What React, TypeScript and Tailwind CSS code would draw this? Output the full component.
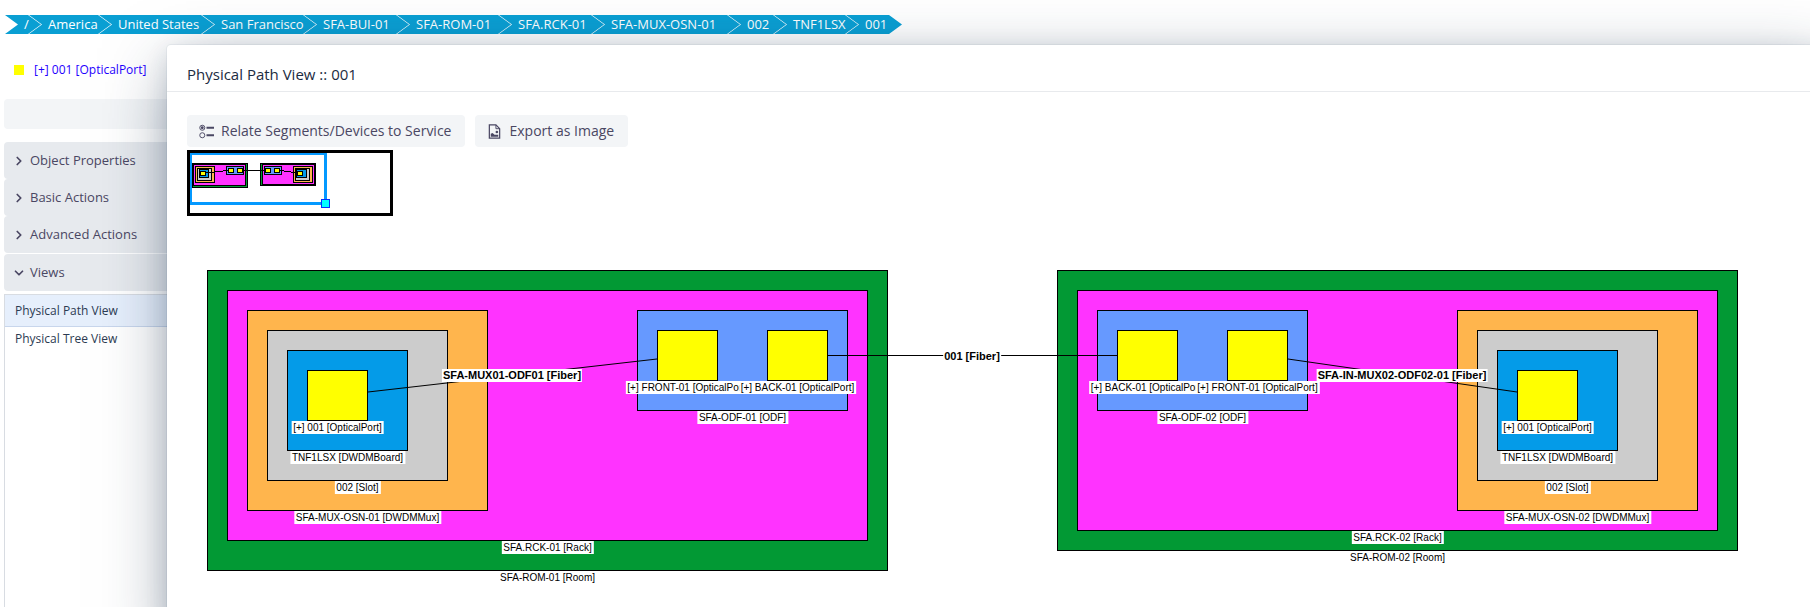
import type { ReactNode } from 'react';
import clsx from 'clsx';
import { ChevronDown, ChevronRight } from 'lucide-react';

interface Crumb {
  name: string;
  width: number;
}

interface GraphNode {
  id: string;
  label: string;
  x: number;
  y: number;
  width: number;
  height: number;
  color: string;
}

interface GraphEdge {
  id: string;
  label: string;
  from: [number, number];
  to: [number, number];
  labelX: number;
  labelY: number;
}

const breadcrumbs: Crumb[] = [
  { name: '/', width: 36 },
  { name: 'America', width: 82 },
  { name: 'United States', width: 115 },
  { name: 'San Francisco', width: 114 },
  { name: 'SFA-BUI-01', width: 105 },
  { name: 'SFA-ROM-01', width: 114 },
  { name: 'SFA.RCK-01', width: 105 },
  { name: 'SFA-MUX-OSN-01', width: 148 },
  { name: '002', width: 58 },
  { name: 'TNF1LSX', width: 84 },
  { name: '001', width: 56 },
];

const sections = ['Object Properties', 'Basic Actions', 'Advanced Actions'];

const nodes: GraphNode[] = [
  { id: 'room1', label: 'SFA-ROM-01 [Room]', x: 20, y: 20, width: 681, height: 301, color: 'bg-[#029934]' },
  { id: 'rack1', label: 'SFA.RCK-01 [Rack]', x: 40, y: 40, width: 641, height: 251, color: 'bg-[#ff33ff]' },
  { id: 'mux1', label: 'SFA-MUX-OSN-01 [DWDMMux]', x: 60, y: 60, width: 241, height: 201, color: 'bg-[#ffb54d]' },
  { id: 'slot1', label: '002 [Slot]', x: 80, y: 80, width: 181, height: 151, color: 'bg-[#cccccc]' },
  { id: 'board1', label: 'TNF1LSX [DWDMBoard]', x: 100, y: 100, width: 121, height: 101, color: 'bg-[#049be8]' },
  { id: 'port1', label: '[+] 001 [OpticalPort]', x: 120, y: 120, width: 61, height: 51, color: 'bg-[#ffff00]' },
  { id: 'odf1', label: 'SFA-ODF-01 [ODF]', x: 450, y: 60, width: 211, height: 101, color: 'bg-[#6699ff]' },
  { id: 'front1', label: '[+] FRONT-01 [OpticalPort]', x: 470, y: 80, width: 61, height: 51, color: 'bg-[#ffff00]' },
  { id: 'back1', label: '[+] BACK-01 [OpticalPort]', x: 580, y: 80, width: 61, height: 51, color: 'bg-[#ffff00]' },
  { id: 'room2', label: 'SFA-ROM-02 [Room]', x: 870, y: 20, width: 681, height: 281, color: 'bg-[#029934]' },
  { id: 'rack2', label: 'SFA.RCK-02 [Rack]', x: 890, y: 40, width: 641, height: 241, color: 'bg-[#ff33ff]' },
  { id: 'odf2', label: 'SFA-ODF-02 [ODF]', x: 910, y: 60, width: 211, height: 101, color: 'bg-[#6699ff]' },
  { id: 'back2', label: '[+] BACK-01 [OpticalPort]', x: 930, y: 80, width: 61, height: 51, color: 'bg-[#ffff00]' },
  { id: 'front2', label: '[+] FRONT-01 [OpticalPort]', x: 1040, y: 80, width: 61, height: 51, color: 'bg-[#ffff00]' },
  { id: 'mux2', label: 'SFA-MUX-OSN-02 [DWDMMux]', x: 1270, y: 60, width: 241, height: 201, color: 'bg-[#ffb54d]' },
  { id: 'slot2', label: '002 [Slot]', x: 1290, y: 80, width: 181, height: 151, color: 'bg-[#cccccc]' },
  { id: 'board2', label: 'TNF1LSX [DWDMBoard]', x: 1310, y: 100, width: 121, height: 101, color: 'bg-[#049be8]' },
  { id: 'port2', label: '[+] 001 [OpticalPort]', x: 1330, y: 120, width: 61, height: 51, color: 'bg-[#ffff00]' },
];

const edges: GraphEdge[] = [
  { id: 'e1', label: 'SFA-MUX01-ODF01 [Fiber]', from: [181, 142], to: [470, 109], labelX: 325, labelY: 119 },
  { id: 'e2', label: '001 [Fiber]', from: [641, 105.5], to: [930, 105.5], labelX: 785, labelY: 100 },
  { id: 'e3', label: 'SFA-IN-MUX02-ODF02-01 [Fiber]', from: [1101, 109], to: [1330, 142], labelX: 1215, labelY: 119 },
];

// [x, y, width, height, fill]
const outlineRects: [number, number, number, number, string][] = [
  [5, 13, 56, 25, '#029934'],
  [6, 14, 53, 22, '#ff33ff'],
  [8, 16, 20, 17, '#ffb54d'],
  [10, 18, 15, 13, '#cccccc'],
  [12, 19, 10, 9, '#049be8'],
  [13, 21, 6, 5, '#ffff00'],
  [39, 16, 18, 9, '#6699ff'],
  [41, 18, 6, 5, '#ffff00'],
  [50, 18, 6, 5, '#ffff00'],
  [73, 13, 56, 23, '#029934'],
  [75, 14, 53, 21, '#ff33ff'],
  [77, 16, 18, 9, '#6699ff'],
  [78, 18, 6, 5, '#ffff00'],
  [87, 18, 6, 5, '#ffff00'],
  [106, 16, 20, 17, '#ffb54d'],
  [108, 18, 15, 13, '#cccccc'],
  [109, 19, 11, 9, '#049be8'],
  [110, 21, 6, 5, '#ffff00'],
];

function Breadcrumbs() {
  return (
    <nav aria-label="Location" className="flex pt-[15px] pl-[5px]">
      {breadcrumbs.map((crumb, index) => (
        <a
          key={crumb.name}
          href="#"
          className={clsx(
            'h-[19px] shrink-0 bg-[#0a9fd3] pl-[19px] text-[13px] leading-[19px] whitespace-nowrap text-white',
            '[clip-path:polygon(0_0,calc(100%-13px)_0,100%_50%,calc(100%-13px)_100%,0_100%,13px_50%)]',
            index > 0 && '-ml-3'
          )}
          style={{ minWidth: crumb.width }}
        >
          {crumb.name}
        </a>
      ))}
    </nav>
  );
}

function Sidebar() {
  return (
    <aside className="w-[300px] pl-1">
      <div className="flex h-[65px] items-center gap-[10px] pt-[7px] pl-[10px]">
        <span className="size-[10px] bg-[#ffff00]" />
        <a href="#" className="text-xs text-[#1f00ff]">
          [+] 001 [OpticalPort]
        </a>
      </div>
      <div className="h-[30px] rounded bg-[#f3f5f7]" />
      <div className="mt-[13px]">
        {sections.map((title) => (
          <button
            key={title}
            type="button"
            className="flex h-[37px] w-full items-center gap-1 rounded bg-[#e7eaee] pl-2 text-[13px] text-[#4a4763]"
          >
            <ChevronRight className="size-[14px]" strokeWidth={3} />
            {title}
          </button>
        ))}
        <button
          type="button"
          className="mt-px flex h-[37px] w-full items-center gap-1 rounded bg-[#e7eaee] pl-2 text-[13px] text-[#4a4763]"
        >
          <ChevronDown className="size-[14px]" strokeWidth={3} />
          Views
        </button>
        <ul className="mt-[3px] h-[320px] border-t border-l border-[#d8dce2] text-xs text-[#2c3b52]">
          <li className="border-b border-[#c8d6ec] bg-[#e6effc]">
            <a href="#" className="flex h-[31px] items-center pl-[10px]">
              Physical Path View
            </a>
          </li>
          <li>
            <a href="#" className="flex h-6 items-center pl-[10px]">
              Physical Tree View
            </a>
          </li>
        </ul>
      </div>
    </aside>
  );
}

function ToolButton({ icon, children }: { icon: ReactNode; children: ReactNode }) {
  return (
    <button
      type="button"
      className="flex h-8 items-center gap-[7px] rounded bg-[#f3f5f7] pr-[14px] pl-3 text-sm whitespace-nowrap text-[#4a4763]"
    >
      {icon}
      {children}
    </button>
  );
}

function RelateIcon() {
  return (
    <svg viewBox="0 0 16 16" className="size-[15px]" fill="none" stroke="currentColor">
      <circle cx="3.5" cy="4" r="2.7" />
      <circle cx="3.5" cy="4" r="1.5" fill="currentColor" stroke="none" />
      <circle cx="3.5" cy="12" r="2.7" />
      <path d="M8 4h8M8 12h8" strokeWidth="2" />
    </svg>
  );
}

function FileImageIcon() {
  return (
    <svg viewBox="0 0 16 16" className="size-[15px]" fill="none" stroke="currentColor">
      <path d="M2.5 1h7l4 4v10h-11z" strokeWidth="1.3" />
      <path d="M9.5 1v4h4" />
      <path d="M4 13.5v-3l2-1 2 2h4v2z" fill="currentColor" stroke="none" />
      <circle cx="10.5" cy="8.5" r="1.4" fill="currentColor" stroke="none" />
    </svg>
  );
}

function Outline() {
  return (
    <svg width="206" height="66" viewBox="0 0 206 66" shapeRendering="crispEdges" role="img" aria-label="Outline">
      <rect width="206" height="66" fill="#000000" />
      <rect x="3" y="3" width="200" height="60" fill="#ffffff" />
      <path d="M3 3h137v52H3zM5 5v47h132V5z" fill="#0499ff" fillRule="evenodd" />
      {outlineRects.map(([x, y, width, height, fill], index) => (
        <g key={index}>
          <rect x={x} y={y} width={width} height={height} fill="#000000" />
          <rect x={x + 1} y={y + 1} width={width - 2} height={height - 2} fill={fill} />
        </g>
      ))}
      <path
        d="M19 22h9v1h-9zM28 21h8v1h-8zM36 20h5v1h-5zM56 20h22v1H56zM93 20h4v1h-4zM97 21h7v1h-7zM104 22h6v1h-6z"
        fill="#000000"
      />
      <rect x="134" y="49" width="9" height="9" fill="#0033ff" />
      <rect x="135" y="50" width="7" height="7" fill="#00ffff" />
    </svg>
  );
}

function PathGraph() {
  return (
    <div className="relative mt-[34px] h-[357px] font-['Liberation_Sans',Arial,sans-serif] leading-[13px] text-black">
      {nodes.map((node) => (
        <div
          key={node.id}
          className={clsx('absolute border border-black', node.color)}
          style={{ left: node.x, top: node.y, width: node.width, height: node.height }}
        >
          <span className="absolute top-full left-1/2 mt-px -translate-x-1/2 bg-white px-0.5 text-[10px] whitespace-nowrap">
            {node.label}
          </span>
        </div>
      ))}
      <svg className="absolute top-0 left-0 size-full" stroke="#000000">
        {edges.map((edge) => (
          <line key={edge.id} x1={edge.from[0]} y1={edge.from[1]} x2={edge.to[0]} y2={edge.to[1]} />
        ))}
      </svg>
      {edges.map((edge) => (
        <span
          key={edge.id}
          className="absolute -translate-x-1/2 bg-white px-px text-[11px] font-bold whitespace-nowrap"
          style={{ left: edge.labelX, top: edge.labelY }}
        >
          {edge.label}
        </span>
      ))}
    </div>
  );
}

function PathViewDialog() {
  return (
    <section
      role="dialog"
      aria-labelledby="dialog-title"
      className="absolute top-[45px] -right-6 -bottom-10 left-[167px] rounded bg-white shadow-[0_0_0_1px_hsla(214,61%,25%,0.05),0_4px_24px_-3px_hsla(214,53%,23%,0.16),0_18px_64px_-8px_hsla(214,45%,20%,0.5)]"
    >
      <header className="flex h-[47px] items-center border-b border-[#e8eaed] px-5 pt-[13px]">
        <h2 id="dialog-title" className="text-[15px] font-medium text-[#1b2b41]">
          Physical Path View :: 001
        </h2>
      </header>
      <div className="px-5 pt-[23px]">
        <div className="mb-[3px] flex gap-[10px]">
          <ToolButton icon={<RelateIcon />}>Relate Segments/Devices to Service</ToolButton>
          <ToolButton icon={<FileImageIcon />}>Export as Image</ToolButton>
        </div>
        <Outline />
        <PathGraph />
      </div>
    </section>
  );
}

export default function App() {
  return (
    <main className="relative h-screen overflow-hidden bg-white font-['Open_Sans','Noto_Sans',sans-serif]">
      <Breadcrumbs />
      <Sidebar />
      <PathViewDialog />
    </main>
  );
}
